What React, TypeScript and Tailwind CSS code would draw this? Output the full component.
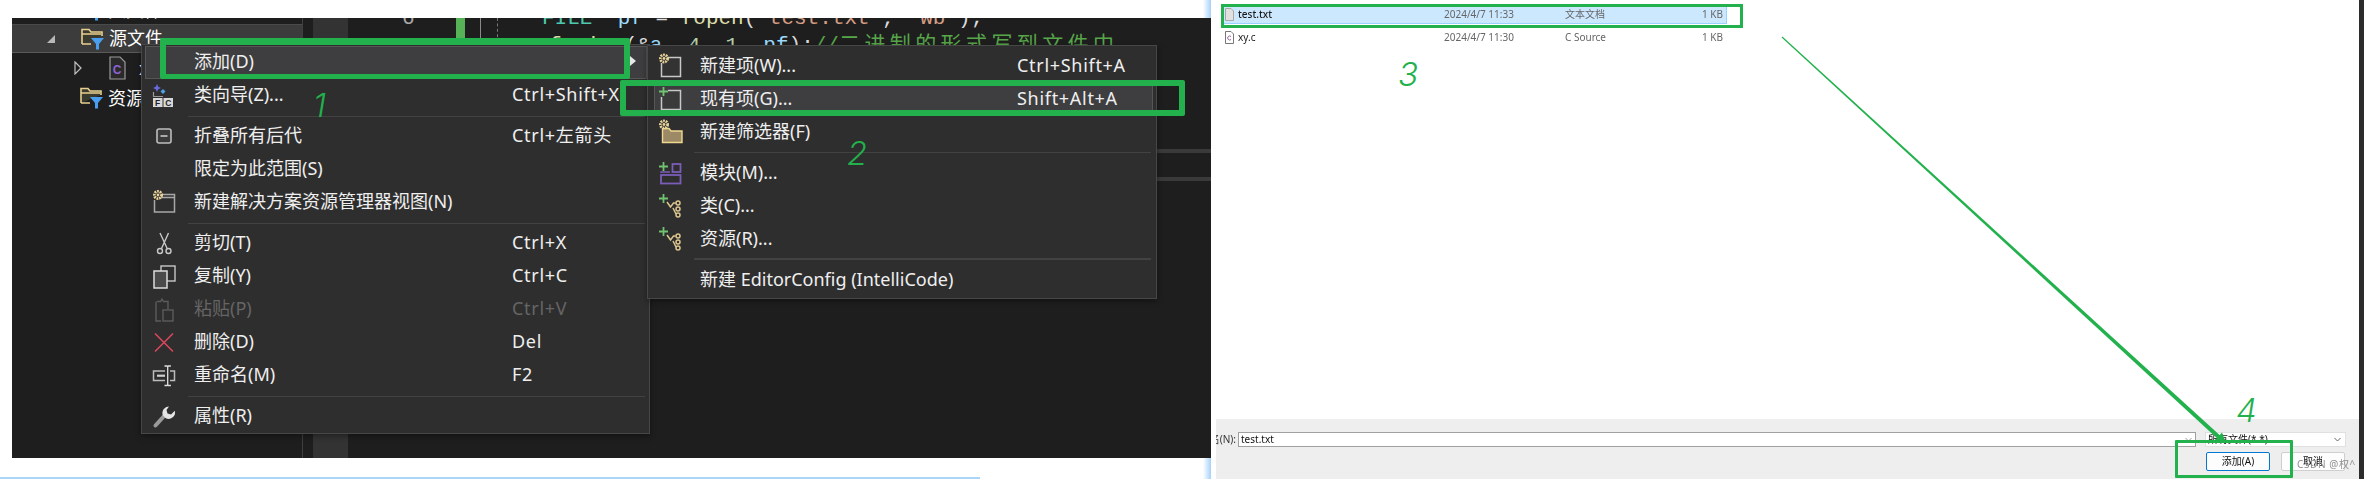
import React from "react";

const Gear = ({ x, y }: { x: number; y: number }) => (
  <g>
    <circle cx={x} cy={y} r={3.6} fill="#2e2e2e" stroke="#e8d49a" strokeWidth={2.8} strokeDasharray="1.8 0.8" />
    <circle cx={x} cy={y} r={1.4} fill="#e8d49a" />
  </g>
);
const Plus = ({ x, y }: { x: number; y: number }) => (
  <path d={`M${x - 4.5} ${y}H${x + 4.5}M${x} ${y - 4.5}V${y + 4.5}`} stroke="#71c271" strokeWidth={1.8} fill="none" />
);
const Ic = ({ children }: { children: React.ReactNode }) => (
  <svg width={24} height={24} viewBox="0 0 24 24" className="block overflow-visible">
    {children}
  </svg>
);

const IconWizard = () => (
  <Ic>
    <path d="M5 0l1.2 2.8L9 4 6.2 5.2 5 8 3.8 5.2 1 4l2.800-1.200z" fill="#6a6ae0" />
    <path d="M11 5l2.500 2.500L11 10 8.500 7.500z" fill="#4aa3e8" />
    <path d="M1.500 8v4.500H11" stroke="#999" strokeWidth={1.2} fill="none" />
    <rect x={1} y={14} width={9.5} height={9} fill="#d8d8d8" />
    <rect x={11.5} y={14} width={9.5} height={9} fill="#d8d8d8" />
    <text x={5.7} y={22} textAnchor="middle" fontSize={8.5} fontWeight={700} fill="#222" fontFamily="Liberation Sans">F</text>
    <text x={16.2} y={22} textAnchor="middle" fontSize={8.5} fontWeight={700} fill="#222" fontFamily="Liberation Sans">C</text>
  </Ic>
);
const IconCollapse = () => (
  <Ic>
    <rect x={5} y={4} width={14} height={14} rx={2} fill="#3a3a3a" stroke="#bdbdbd" strokeWidth={1.6} />
    <path d="M8.500 11h7" stroke="#c8c8c8" strokeWidth={1.6} />
  </Ic>
);
const IconWindow = () => (
  <Ic>
    <path d="M9 3.500H22.500V21H2.500V9M9 6.500H22.500" fill="none" stroke="#a8a8a8" strokeWidth={1.5} />
    <Gear x={6} y={4} />
  </Ic>
);
const IconScissors = () => (
  <Ic>
    <path d="M8 1l7.200 15.500M16.500 1L9.500 16.500" stroke="#c8c8c8" strokeWidth={1.4} fill="none" />
    <circle cx={8} cy={19} r={2.5} fill="none" stroke="#c8c8c8" strokeWidth={1.4} />
    <circle cx={16.5} cy={19} r={2.5} fill="none" stroke="#c8c8c8" strokeWidth={1.4} />
  </Ic>
);
const IconCopy = () => (
  <Ic>
    <rect x={9} y={1} width={14} height={15} fill="#2e2e2e" stroke="#c8c8c8" strokeWidth={1.4} />
    <rect x={2} y={6} width={13} height={17} fill="#4a4a4a" stroke="#dcdcdc" strokeWidth={1.5} />
  </Ic>
);
const IconPaste = () => (
  <Ic>
    <path d="M5 3.500h3.500l1.500-2.500 1.500 2.500H16V11M9 23H4V3.500" fill="none" stroke="#5c5c5c" strokeWidth={1.4} />
    <rect x={11} y={12} width={10} height={11} fill="none" stroke="#5c5c5c" strokeWidth={1.4} />
  </Ic>
);
const IconX = () => (
  <Ic>
    <path d="M3 2.500l18 18M21 2.500l-18 18" stroke="#d9475c" strokeWidth={1.6} />
  </Ic>
);
const IconRename = () => (
  <Ic>
    <path d="M13 7H1.500v9.500H13M18 7h4.500v9.500H18" fill="none" stroke="#bdbdbd" strokeWidth={1.5} />
    <path d="M5 11.700h8" stroke="#d0d0d0" strokeWidth={2.2} />
    <path d="M12.500 2h2.500l.7.8.7-.8h2.500M15.700 2.800V20.600M12.500 21.500h2.500l.7-.8.7.8h2.500" fill="none" stroke="#dedede" strokeWidth={1.3} />
  </Ic>
);
const IconWrench = () => (
  <Ic>
    <path d="M3.500 20.500L13 10" stroke="#9a9a9a" strokeWidth={4} strokeLinecap="round" />
    <path d="M17 1.500a6.500 6.500 0 0 0-6.200 8.800l3 3a6.500 6.500 0 0 0 9-7.600L19 9.500 15.500 8.500 14.500 5z" fill="#e4e4e4" />
  </Ic>
);
const IconNewItem = () => (
  <Ic>
    <path d="M9 3.500H22.500V22.500H3.500V9" fill="#333" stroke="#c8c8c8" strokeWidth={1.5} />
    <Gear x={6} y={4.5} />
  </Ic>
);
const IconExisting = () => (
  <Ic>
    <path d="M10 3.500H22.500V22.500H3.500V10" fill="#3a3a3a" stroke="#c8c8c8" strokeWidth={1.5} />
    <Plus x={5.5} y={4.5} />
  </Ic>
);
const IconFolderNew = () => (
  <Ic>
    <path d="M4.500 22.500V8.500H11L13 11H24V22.500z" fill="#9c8a66" stroke="#f0d890" strokeWidth={1.4} />
    <Gear x={6} y={4.5} />
  </Ic>
);
const IconModule = () => (
  <Ic>
    <rect x={14.5} y={3} width={8} height={8} fill="none" stroke="#7b5cb8" strokeWidth={1.8} />
    <rect x={3} y={14} width={19.5} height={8.5} fill="none" stroke="#7b5cb8" strokeWidth={1.8} />
    <path d="M3 12v-1h9" stroke="#7b5cb8" strokeWidth={1.4} fill="none" />
    <Plus x={5.5} y={5.5} />
  </Ic>
);
const IconClass = () => (
  <Ic>
    <path d="M9 8l3.500 5 3-4h2M15 14l3 6" stroke="#dcc78f" strokeWidth={1.5} fill="none" />
    <circle cx={20} cy={9} r={2} fill="none" stroke="#dcc78f" strokeWidth={1.5} />
    <circle cx={20} cy={15} r={2} fill="none" stroke="#dcc78f" strokeWidth={1.5} />
    <circle cx={20} cy={21} r={2} fill="none" stroke="#dcc78f" strokeWidth={1.5} />
    <Plus x={5.5} y={4.5} />
  </Ic>
);

const FolderFilter = () => (
  <svg width={24} height={22} viewBox="0 0 24 22" className="block shrink-0">
    <path d="M1 16V1.500H8l2 2.500h11v4" fill="#3a3a2e" stroke="#e8cf90" strokeWidth={1.6} />
    <path d="M1 16h9M1 6h19" stroke="#e8cf90" strokeWidth={1.6} fill="none" />
    <path d="M10 10h13l-5 6v5.500h-3V16z" fill="#4a9eef" />
  </svg>
);

const Row = ({
  icon, label, shortcut, sub, active, disabled,
}: {
  icon?: React.ReactNode; label: string; shortcut?: string; sub?: boolean; active?: boolean; disabled?: boolean;
}) => (
  <div
    className={`relative flex items-center h-[33px] border ${active ? "bg-[#3e3e40] border-[#565656]" : "border-transparent"} ${disabled ? "text-[#656565]" : "text-[#efefef]"}`}
  >
    <div className={`flex justify-center shrink-0 ${sub ? "w-[30px] mr-[15px]" : "w-[36px] mr-[12px]"}`}>{icon}</div>
    <div className={`shrink-0 whitespace-nowrap ${sub ? "w-[317px]" : "w-[318px] mb-[2px]"}`}>{label}</div>
    {shortcut && <div className={`whitespace-nowrap tracking-[0.7px] ${sub ? "" : "mb-[2px]"}`}>{shortcut}</div>}
  </div>
);

const Sep = ({ sub, thick }: { sub?: boolean; thick?: boolean }) => (
  <div className={`h-[8px] flex items-center ${sub ? "pl-[40px] pr-[2px]" : "pl-[43px] pr-[2px]"}`}>
    <div className={`w-full ${thick ? "h-[2px]" : "h-[1px]"} bg-[#424242]`} />
  </div>
);

const Digit = ({ children, className }: { children: string; className: string }) => (
  <div className={`absolute text-[33px] leading-none italic font-light text-[#22b14c] font-['Inter',sans-serif] ${className}`}>{children}</div>
);

export default function App() {
  return (
    <div className="relative flex w-[2364px] h-[479px] overflow-hidden bg-white font-['Noto_Sans','Noto_Sans_CJK_SC',sans-serif]">
      {/* Left screenshot */}
      <div className="flex flex-col w-[1211px] shrink-0">
        <div className="h-[18px] bg-[linear-gradient(90deg,#fff_1203px,#a6d1fa_1211px)]" />
        <div className="ml-[12px] h-[440px] flex bg-[#1e1e1e] overflow-hidden text-[18px] text-white">
          {/* Solution tree */}
          <div className="w-[291px] shrink-0 border-r border-[#3f3f3f] flex flex-col">
            <div className="h-[7px] overflow-hidden flex items-end border-b border-[#4a4a4a]">
              <div className="flex items-center gap-[4px] pl-[68px] h-[28px] shrink-0">
                <FolderFilter />
                <span>头文件</span>
              </div>
            </div>
            <div className="h-[28px] bg-[#3c3c3c] border-b border-[#5a5a5a] flex items-center">
              <svg width={10} height={10} viewBox="0 0 10 10" className="ml-[34px] mr-[25px] shrink-0">
                <path d="M9 1v8H1z" fill="#b8b8b8" />
              </svg>
              <FolderFilter />
              <span className="ml-[4px]">源文件</span>
            </div>
            <div className="h-[30px] flex items-center">
              <svg width={9} height={14} viewBox="0 0 9 14" className="ml-[62px] mr-[26px] shrink-0">
                <path d="M1 1l6 6-6 6z" fill="none" stroke="#c0c0c0" strokeWidth={1.2} />
              </svg>
              <svg width={17} height={24} viewBox="0 0 17 24" className="shrink-0">
                <path d="M1 1h10l5 5v17H1z" fill="#2a2a2a" stroke="#9a9a9a" strokeWidth={1.2} />
                <text x={8} y={18} textAnchor="middle" fontSize={12} fontWeight={700} fill="#8d63d2" fontFamily="Liberation Sans">C</text>
              </svg>
              <span className="ml-[13px]">xy.c</span>
            </div>
            <div className="h-[30px] flex items-center pl-[68px]">
              <FolderFilter />
              <span className="ml-[4px]">资源文件</span>
            </div>
          </div>
          <div className="w-[10px] shrink-0" />
          <div className="w-[35px] shrink-0 bg-[#333333]" />
          {/* Gutter */}
          <div className="w-[108px] shrink-0 pl-[54px] -mt-[13px] font-['Liberation_Mono',monospace] text-[21px] leading-[27px] text-[#a8a8a8]">6</div>
          <div className="w-[9px] h-[30px] shrink-0 bg-[#57b257]" />
          <div className="w-[16px] h-[30px] shrink-0 border-r border-[#8a8a8a]" />
          <div className="w-[17px] h-[30px] shrink-0 border-r border-dashed border-[#777777]" />
          {/* Code */}
          <div className="flex-1 min-w-0 flex flex-col pl-[44px]">
            <div className="-mt-[13px] font-['Liberation_Mono','Noto_Sans_CJK_SC',monospace] text-[21px] leading-[27px] whitespace-pre text-[#dcdcdc]">
              <div>
                <span className="text-[#4ec9b0]">FILE</span>* <span className="text-[#9cdcfe]">pf</span> = <span className="text-[#dcdcaa]">fopen</span>(<span className="text-[#d69d85]">"test.txt"</span>, <span className="text-[#d69d85]">"wb"</span>);
              </div>
              <div className="ml-[7px]">
                <span className="text-[#dcdcaa]">fwrite</span>(&amp;<span className="text-[#9cdcfe]">a</span>, <span className="text-[#b5cea8]">4</span>, <span className="text-[#b5cea8]">1</span>, <span className="text-[#9cdcfe]">pf</span>);<span className="text-[#57a64a]">//<span className="tracking-[4.4px]">二进制的形式写到文件中</span></span>
              </div>
            </div>
            <div className="ml-auto w-[54px] h-[4px] mt-[90px] bg-[#3a3a3a]" />
            <div className="ml-auto w-[54px] h-[4px] mt-[24px] bg-[#3a3a3a]" />
          </div>
        </div>
        <div className="h-[21px] pt-[19px] bg-[linear-gradient(90deg,#fff_1203px,#a6d1fa_1211px)]">
          <div className="h-[2px] w-[980px] bg-[#a9d5fb]" />
        </div>
      </div>

      {/* Right screenshot */}
      <div className="flex-1 min-w-0 flex flex-col pr-[5px] bg-[#2b2b2b] text-[10px]">
        <div className="flex-1 min-h-0 bg-white pt-[4px] pl-[10px] blur-[0.3px]">
          <div className="flex items-center h-[20px] w-[506px] bg-[#cce8ff] border border-[#99d1ff] text-[#1a1a1a]">
            <svg width={9} height={13} viewBox="0 0 9 13" className="ml-[3px] mr-[4px] shrink-0">
              <path d="M.5.5h5.500l2.500 2.500v9.500H.5z" fill="#e0e0e0" stroke="#a8a8a8" />
            </svg>
            <span className="w-[206px] shrink-0 font-medium">test.txt</span>
            <span className="w-[121px] shrink-0 text-[#666666]">2024/4/7 11:33</span>
            <span className="flex-1 text-[#666666]">文本文档</span>
            <span className="pr-[3px] text-[#666666]">1 KB</span>
          </div>
          <div className="flex items-center h-[20px] w-[506px] mt-[3px] border border-transparent text-[#1a1a1a]">
            <svg width={9} height={13} viewBox="0 0 9 13" className="ml-[3px] mr-[4px] shrink-0">
              <path d="M.5.5h5.500l2.500 2.500v9.500H.5z" fill="#fff" stroke="#777" />
              <path d="M6 5.500a2 2 0 1 0 0 3" fill="none" stroke="#9a5fa0" />
            </svg>
            <span className="w-[206px] shrink-0">xy.c</span>
            <span className="w-[121px] shrink-0 text-[#666666]">2024/4/7 11:30</span>
            <span className="flex-1 text-[#666666]">C Source</span>
            <span className="pr-[3px] text-[#666666]">1 KB</span>
          </div>
        </div>
        <div className="flex">
          <div className="w-[5px] bg-white shrink-0" />
          <div className="flex-1 h-[60px] bg-[#eeeeee] pt-[13px] blur-[0.3px]">
            <div className="flex h-[15px]">
              <div className="w-[22px] shrink-0 overflow-hidden flex justify-end pr-[2px] items-center text-[#333333] whitespace-nowrap">名(N):</div>
              <div className="w-[958px] shrink-0 bg-white border border-[#a0a0a0] flex items-center justify-between pl-[2px] pr-[3px] text-[#111111]">
                <span>test.txt</span>
                <svg width={7} height={5} viewBox="0 0 7 5"><path d="M.5 1l3 3 3-3" fill="none" stroke="#999" /></svg>
              </div>
              <div className="w-[141px] ml-[9px] shrink-0 bg-white border border-[#e0e0e0] flex items-center justify-between pl-[2px] pr-[4px] text-[#111111]">
                <span>所有文件(*.*)</span>
                <svg width={7} height={5} viewBox="0 0 7 5"><path d="M.5 1l3 3 3-3" fill="none" stroke="#666" /></svg>
              </div>
            </div>
            <div className="flex justify-end gap-[11px] pr-[14px] mt-[5px]">
              <div className="w-[64px] h-[19px] bg-[#fdfdfd] border border-[#0078d4] rounded-[2px] flex items-center justify-center text-[#111111]">添加(A)</div>
              <div className="w-[64px] h-[19px] bg-[#fdfdfd] border border-[#cfcfcf] rounded-[2px] flex items-center justify-center text-[#111111]">取消</div>
            </div>
          </div>
        </div>
      </div>

      {/* Context menu */}
      <div className="absolute left-[141px] top-[44px] w-[509px] h-[390px] bg-[#2e2e2e] border border-[#474747] pl-[3px] pr-[2px] pt-[1px] text-[18px] shadow-[0_2px_6px_rgba(0,0,0,0.4)]">
        <Row label="添加(D)" active />
        <Row icon={<IconWizard />} label="类向导(Z)..." shortcut="Ctrl+Shift+X" />
        <Sep />
        <Row icon={<IconCollapse />} label="折叠所有后代" shortcut="Ctrl+左箭头" />
        <Row label="限定为此范围(S)" />
        <Row icon={<IconWindow />} label="新建解决方案资源管理器视图(N)" />
        <Sep />
        <Row icon={<IconScissors />} label="剪切(T)" shortcut="Ctrl+X" />
        <Row icon={<IconCopy />} label="复制(Y)" shortcut="Ctrl+C" />
        <Row icon={<IconPaste />} label="粘贴(P)" shortcut="Ctrl+V" disabled />
        <Row icon={<IconX />} label="删除(D)" shortcut="Del" />
        <Row icon={<IconRename />} label="重命名(M)" shortcut="F2" />
        <Sep />
        <Row icon={<IconWrench />} label="属性(R)" />
      </div>
      <svg width={6} height={10} viewBox="0 0 6 10" className="absolute left-[630px] top-[56px]">
        <path d="M0 0l6 5-6 5z" fill="#e8e8e8" />
      </svg>

      {/* Submenu */}
      <div className="absolute left-[647px] top-[45px] w-[510px] h-[254px] bg-[#2e2e2e] border border-[#474747] pl-[6px] pr-[3px] pt-[3px] text-[18px] shadow-[0_2px_6px_rgba(0,0,0,0.4)]">
        <Row sub icon={<IconNewItem />} label="新建项(W)..." shortcut="Ctrl+Shift+A" />
        <Row sub active icon={<IconExisting />} label="现有项(G)..." shortcut="Shift+Alt+A" />
        <Row sub icon={<IconFolderNew />} label="新建筛选器(F)" />
        <Sep sub />
        <Row sub icon={<IconModule />} label="模块(M)..." />
        <Row sub icon={<IconClass />} label="类(C)..." />
        <Row sub icon={<IconClass />} label="资源(R)..." />
        <Sep sub thick />
        <Row sub label="新建 EditorConfig (IntelliCode)" />
      </div>

      {/* Watermark */}
      <div className="absolute left-[2297px] top-[457px] text-[10px] leading-[14px] tracking-[0.6px] text-[#8f8f8f] whitespace-nowrap blur-[0.2px]">CSDN @权^</div>

      {/* Annotations */}
      <div className="absolute left-[160px] top-[38px] w-[470px] h-[41px] border-x-[6px] border-t-[7px] border-b-[5px] border-[#22b14c] rounded-[2px]" />
      <div className="absolute left-[620px] top-[80px] w-[565px] h-[36px] border-x-[6px] border-y-[6px] border-[#22b14c] rounded-[2px]" />
      <div className="absolute left-[1221px] top-[4px] w-[522px] h-[24px] border-[3px] border-[#22b14c]" />
      <div className="absolute left-[2175px] top-[440px] w-[118px] h-[38px] border-[3px] border-[#22b14c] rounded-[1px]" />
      <Digit className="left-[313px] top-[89px]">1</Digit>
      <Digit className="left-[847px] top-[137px]">2</Digit>
      <Digit className="left-[1398px] top-[58px]">3</Digit>
      <Digit className="left-[2236px] top-[394px]">4</Digit>
      <svg width={2364} height={479} viewBox="0 0 2364 479" className="absolute left-0 top-0 pointer-events-none">
        <polygon points="1781.600,37.400 1782.400,36.600 2223.400,438.500 2220.600,441.500" fill="#22b14c" />
        <polygon points="2226,443 2215.200,439.900 2222,432.500" fill="#22b14c" />
      </svg>
    </div>
  );
}
